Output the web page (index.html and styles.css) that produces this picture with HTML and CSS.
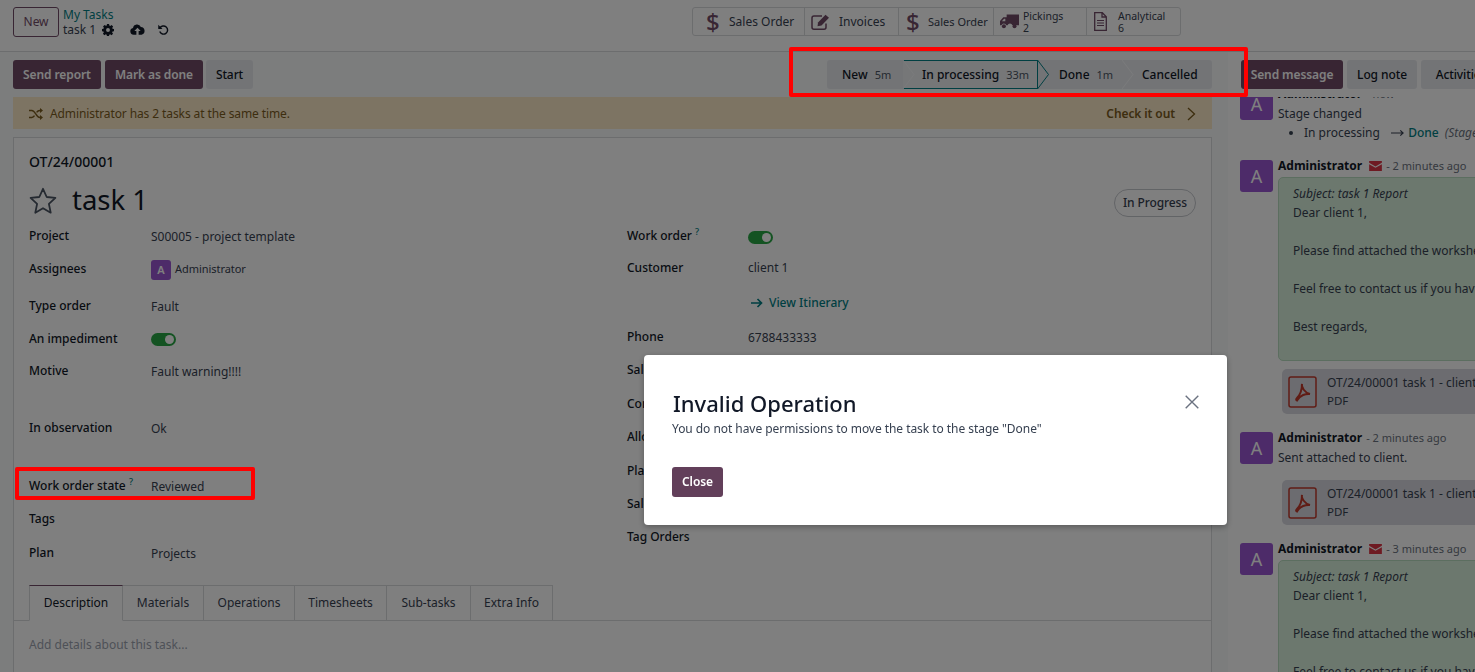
FILE: index.html
```html
<!DOCTYPE html>
<html>

<head>
    <meta charset="UTF-8">
    <title>task 1</title>
    <link rel="stylesheet" href="styles.css">
</head>

<body>
    <div class="topbar">
        <a class="btn btn-outline" href="#">New</a>
        <div class="crumbs">
            <a href="#">My Tasks</a>
            <div class="crumb-row">
                <span>task 1</span>
                <svg class="ic-gear" viewBox="0 0 16 16"><path d="M6.6 0h2.8l.4 2.1 1.2.5L12.8 1.400l2 2-1.200 1.800.5 1.200 1.900.400v2.800l-2 .4-.5 1.200 1.200 1.800-2 2-1.800-1.200-1.200.5-.4 2H6.600l-.4-2-1.200-.5-1.800 1.200-2-2 1.200-1.800-.5-1.200-1.900-.4V6.600l2-.4.5-1.200L1.400 3.200l2-2 1.800 1.200 1.200-.5z M8 5.400a2.600 2.600 0 1 0 0 5.200 2.600 2.600 0 0 0 0-5.200z" fill-rule="evenodd"/></svg>
                <svg class="ic-cloud" viewBox="0 0 20 14"><path d="M5 14a4.500 4.500 0 0 1-1-8.900A5.500 5.500 0 0 1 14.500 3.600 5.300 5.300 0 0 1 15.500 14h-4V9h2.700L10 4.500 5.800 9h2.700v5z"/></svg>
                <svg class="ic-undo" viewBox="0 0 16 16"><path d="M3.600 6.400A5 5 0 1 1 3.400 10.500" fill="none" stroke="currentColor" stroke-width="1.800"/><path d="M1.500 2.200v5.300h5.300z"/></svg>
            </div>
        </div>
        <div class="stats">
            <a class="stat stat-sales" href="#"><span class="dollar">$</span><span class="stat-text">Sales Order</span></a>
            <a class="stat stat-invoices" href="#">
                <svg class="ic-edit" viewBox="0 0 20 16"><path d="M15 9.500v3.700a2 2 0 0 1-2 2H3a2 2 0 0 1-2-2V4a2 2 0 0 1 2-2h8" fill="none" stroke="currentColor" stroke-width="1.500"/><path d="M7 8.500 14.500.8l3.500 3-7.500 7.700-4 .8z"/></svg>
                <span class="stat-text">Invoices</span>
            </a>
            <a class="stat stat-sales2" href="#"><span class="dollar">$</span><span class="stat-text">Sales Order</span></a>
            <a class="stat stat-pickings" href="#">
                <svg class="ic-truck" viewBox="0 0 20 15"><path d="M7 0h13v11.500h-7a2.600 2.600 0 0 0-5 0H6.600a2.600 2.600 0 0 0-5 0H0V7l3.500-4H7zM5.600 4.500H4.300L2 7.200h3.600z" fill-rule="evenodd"/><circle cx="4.100" cy="12.500" r="2.100"/><circle cx="15.300" cy="12.500" r="2.100"/></svg>
                <span class="stat-lines">Pickings<br>2</span>
            </a>
            <a class="stat stat-analytical" href="#">
                <svg class="ic-file" viewBox="0 0 13 19"><path d="M.7.7h7.600l4 4v13.600H.7z M8 .7v4.300h4.300" fill="none" stroke="currentColor" stroke-width="1.300"/><path d="M3 8.500h7M3 11h7M3 13.500h7" stroke="currentColor" stroke-width="1.200"/></svg>
                <span class="stat-lines">Analytical<br>6</span>
            </a>
        </div>
    </div>

    <div class="main">
        <div class="form">
            <div class="actionbar">
                <a class="btn btn-primary btn-report" href="#">Send report</a>
                <a class="btn btn-primary btn-mark" href="#">Mark as done</a>
                <a class="btn btn-secondary btn-start" href="#">Start</a>
                <div class="stages">
                    <div class="stage stage-new">New <small>5m</small>
                        <svg class="tip" viewBox="0 0 13 29"><path d="M0 0l11 14.500L0 29" fill="none" stroke="#f5f6f8"/></svg>
                    </div>
                    <div class="stage stage-current">In processing <small>33m</small>
                        <svg class="tip" viewBox="0 0 13 29"><path d="M.5 0l11 14.500L.5 29" fill="none" stroke="#017e84"/></svg>
                    </div>
                    <div class="stage stage-done">Done <small>1m</small>
                        <svg class="tip" viewBox="0 0 13 29"><path d="M0 0l11 14.500L0 29" fill="none" stroke="#f5f6f8"/></svg>
                    </div>
                    <div class="stage stage-last">Cancelled</div>
                </div>
            </div>

            <div class="alert">
                <svg class="ic-random" viewBox="0 0 14 12"><path d="M0 2.500h2.800C6.500 2.500 7 9.500 10.800 9.500H11.500M0 9.500h2.800C4 9.500 4.900 8.700 5.500 7.700M7.600 4.300C8.400 3.200 9.300 2.500 10.800 2.500H11.500" fill="none" stroke="currentColor" stroke-width="1.400"/><path d="M11 0l3 2.500L11 5zM11 7l3 2.500L11 12z"/></svg>
                <span>Administrator has 2 tasks at the same time.</span>
                <a class="alert-link" href="#">Check it out
                    <svg class="ic-chev" viewBox="0 0 9 14"><path d="M1 1l6.500 6L1 13" fill="none" stroke="currentColor" stroke-width="1.300"/></svg>
                </a>
            </div>

            <div class="sheet">
                <div class="refname">OT/24/00001</div>
                <div class="title-row">
                    <svg class="ic-star" viewBox="0 0 28 27"><path d="M14 1.800l3.700 8.200 8.700.9-6.500 6 1.800 8.800L14 21.200l-7.700 4.500 1.800-8.800-6.500-6 8.700-.9z" fill="none" stroke="currentColor" stroke-width="1.800" stroke-linejoin="round"/></svg>
                    <h1>task 1</h1>
                    <span class="state-pill">In Progress</span>
                </div>
                <div class="groups">
                    <div class="group group-left">
                        <label>Project</label><div class="val">S00005 - project template</div>
                        <label>Assignees</label><div class="val assignee"><span class="avatar avatar-xs">A</span>Administrator</div>
                        <label>Type order</label><div class="val">Fault</div>
                        <label>An impediment</label><div class="val"><span class="toggle"></span></div>
                        <label>Motive</label><div class="val">Fault warning!!!!</div>
                        <label>In observation</label><div class="val">Ok</div>
                        <label>Work order state <sup>?</sup></label><div class="val">Reviewed</div>
                        <label>Tags</label><div class="val"></div>
                        <label>Plan</label><div class="val">Projects</div>
                    </div>
                    <div class="group group-right">
                        <label>Work order <sup>?</sup></label><div class="val"><span class="toggle"></span></div>
                        <label>Customer</label><div class="val val-flat">client 1</div>
                        <label></label>
                        <div class="val val-flat"><a class="itinerary" href="#">
                            <svg class="ic-arrow" viewBox="0 0 12 10"><path d="M0 5h10M6.500 1l4 4-4 4" fill="none" stroke="currentColor" stroke-width="1.700"/></svg>
                            View Itinerary</a></div>
                        <label>Phone</label><div class="val">6788433333</div>
                        <label>Sales Order</label><div class="val"></div>
                        <label>Contract</label><div class="val"></div>
                        <label>Allocated Hours</label><div class="val"></div>
                        <label>Planned Date</label><div class="val"></div>
                        <label>Sales Order Item</label><div class="val"></div>
                        <label>Tag Orders</label><div class="val"></div>
                    </div>
                </div>
                <div class="tabs">
                    <a class="tab tab-active" href="#">Description</a>
                    <a class="tab" href="#">Materials</a>
                    <a class="tab" href="#">Operations</a>
                    <a class="tab" href="#">Timesheets</a>
                    <a class="tab" href="#">Sub-tasks</a>
                    <a class="tab" href="#">Extra Info</a>
                </div>
                <div class="placeholder">Add details about this task...</div>
            </div>
        </div>

        <div class="chatter">
            <div class="chatter-bar">
                <a class="btn btn-primary" href="#">Send message</a>
                <a class="btn btn-secondary" href="#">Log note</a>
                <a class="btn btn-secondary" href="#">Activities</a>
            </div>
            <div class="thread">
                <div class="thread-inner">
                    <div class="msg">
                        <span class="avatar">A</span>
                        <div class="msg-body">
                            <div class="msg-head"><b>Administrator</b> <span class="when">- now</span></div>
                            <div>Stage changed</div>
                            <ul>
                                <li>In processing
                                    <svg class="ic-long" viewBox="0 0 14 8"><path d="M0 4h12.500M10 1.200 13 4l-3 2.800" fill="none" stroke="currentColor" stroke-width="1.300"/></svg>
                                    <a href="#">Done</a> <em>(Stage)</em></li>
                            </ul>
                        </div>
                    </div>

                    <div class="msg">
                        <span class="avatar">A</span>
                        <div class="msg-body">
                            <div class="msg-head"><b>Administrator</b>
                                <svg class="ic-mail" viewBox="0 0 14 11"><path d="M0 0h14v2L7 6 0 2zM0 3.500l7 4 7-4V11H0z"/></svg>
                                <span class="when">- 2 minutes ago</span></div>
                            <div class="mail-box">
                                <em>Subject: task 1 Report</em>
                                <p>Dear client 1,</p>
                                <p>Please find attached the worksheet of our task.</p>
                                <p>Feel free to contact us if you have any questions.</p>
                                <p>Best regards,</p>
                            </div>
                            <div class="attachment">
                                <svg class="ic-pdf" viewBox="0 0 29 32"><rect x="1" y="1" width="27" height="30" rx="2" fill="none" stroke="currentColor" stroke-width="1.500"/><path d="M14 8c-1 3 3 9 8 10-4-.5-10 1-13 6.500 0 0-2-.5 0-2.500 3-3 5-9 5-14z" fill="none" stroke="currentColor" stroke-width="2"/></svg>
                                <div class="att-text">OT/24/00001 task 1 - client 1<small>PDF</small></div>
                            </div>
                        </div>
                    </div>

                    <div class="msg">
                        <span class="avatar">A</span>
                        <div class="msg-body">
                            <div class="msg-head"><b>Administrator</b> <span class="when">- 2 minutes ago</span></div>
                            <div>Sent attached to client.</div>
                            <div class="attachment">
                                <svg class="ic-pdf" viewBox="0 0 29 32"><rect x="1" y="1" width="27" height="30" rx="2" fill="none" stroke="currentColor" stroke-width="1.500"/><path d="M14 8c-1 3 3 9 8 10-4-.5-10 1-13 6.500 0 0-2-.5 0-2.500 3-3 5-9 5-14z" fill="none" stroke="currentColor" stroke-width="2"/></svg>
                                <div class="att-text">OT/24/00001 task 1 - client 1<small>PDF</small></div>
                            </div>
                        </div>
                    </div>

                    <div class="msg">
                        <span class="avatar">A</span>
                        <div class="msg-body">
                            <div class="msg-head"><b>Administrator</b>
                                <svg class="ic-mail" viewBox="0 0 14 11"><path d="M0 0h14v2L7 6 0 2zM0 3.500l7 4 7-4V11H0z"/></svg>
                                <span class="when">- 3 minutes ago</span></div>
                            <div class="mail-box">
                                <em>Subject: task 1 Report</em>
                                <p>Dear client 1,</p>
                                <p>Please find attached the worksheet of our task.</p>
                                <p>Feel free to contact us if you have any questions.</p>
                                <p>Best regards,</p>
                            </div>
                        </div>
                    </div>
                </div>
            </div>
        </div>
    </div>

    <div class="backdrop"></div>

    <div class="modal">
        <div class="modal-head">
            <h2>Invalid Operation</h2>
            <svg class="ic-close" viewBox="0 0 14 14"><path d="M.7.7l12.600 12.600M13.300.7.7 13.300" fill="none" stroke="currentColor" stroke-width="1.400"/></svg>
        </div>
        <p>You do not have permissions to move the task to the stage "Done"</p>
        <a class="btn btn-close" href="#">Close</a>
    </div>

    <div class="redbox redbox-stages"></div>
    <div class="redbox redbox-state"></div>
</body>

</html>
```

FILE: styles.css
```css
* {
    box-sizing: border-box;
}

html, body {
    height: 100%;
}

body {
    margin: 0;
    overflow: hidden;
    background-color: #fff;
    color: #374151;
    font-family: "Noto Sans", "Liberation Sans", sans-serif;
    font-size: 12px;
    line-height: 18px;
}

a {
    text-decoration: none;
    color: inherit;
}

svg {
    flex: none;
    fill: currentColor;
}

/* buttons */
.btn {
    display: inline-flex;
    flex: none;
    align-items: center;
    justify-content: center;
    height: 29px;
    border-radius: 3px;
    font-weight: 600;
    letter-spacing: -.1px;
    white-space: nowrap;
}

.btn-primary {
    background-color: #714b67;
    color: #fff;
}

.btn-secondary {
    background-color: #e7e9ed;
    color: #111827;
    font-weight: 500;
}

.btn-outline {
    width: 46px;
    height: 30px;
    border: 1px solid #714b67;
    color: #714b67;
    font-weight: 400;
}

.btn-report { width: 88px; }
.btn-mark { width: 98px; }
.btn-start { width: 47px; }

/* top bar */
.topbar {
    display: flex;
    height: 52px;
    padding: 7px 0 0 13px;
    border-bottom: 1px solid #d8dadd;
}

.crumbs {
    width: 120px;
    margin-left: 4px;
    line-height: 15px;
}

.crumbs > a {
    display: block;
    color: #017e84;
}

.crumb-row {
    display: flex;
    align-items: center;
}

.ic-gear {
    width: 12px;
    height: 12px;
    margin-left: 6px;
    color: #111827;
}

.ic-cloud {
    width: 15px;
    height: 11px;
    margin-left: 16px;
    color: #111827;
}

.ic-undo {
    width: 13px;
    height: 13px;
    margin-left: 12px;
    color: #111827;
}

.stats {
    display: flex;
    height: 29px;
    margin-left: 509px;
    border: 1px solid #d8dadd;
    border-radius: 3px;
}

.stat {
    display: flex;
    align-items: center;
    width: 94px;
    border-left: 1px solid #d8dadd;
    color: #374151;
}

.stat-sales {
    width: 111px;
    padding-left: 13px;
    border-left: 0;
}

.stat-invoices {
    padding-left: 6px;
}

.stat-sales2 {
    width: 95px;
    padding-left: 7px;
}

.stat-pickings {
    width: 93px;
    padding-left: 6px;
}

.stat-analytical {
    padding-left: 7px;
}

.dollar {
    width: 12px;
    color: #714b67;
    font-size: 24px;
    font-weight: 500;
    line-height: 27px;
}

.stat-text {
    margin-left: 11px;
}

.stat-invoices .stat-text {
    margin-left: 8px;
}

.stat-sales2 .stat-text {
    margin-left: 10px;
    font-size: 11px;
}

.stat-lines {
    margin-left: 4px;
    font-size: 10.500px;
    line-height: 12px;
}

.stat-analytical .stat-lines {
    margin-left: 11px;
}

.ic-edit {
    width: 20px;
    height: 16px;
    color: #714b67;
}

.ic-truck {
    width: 19px;
    height: 15px;
    color: #714b67;
}

.ic-file {
    width: 13px;
    height: 19px;
    color: #714b67;
}

/* main columns */
.main {
    display: flex;
    height: calc(100vh - 52px);
    overflow: hidden;
}

.form {
    width: 1228px;
    flex: none;
    padding: 8px 16px 0 13px;
    overflow: hidden;
    background-color: #f9fafb;
}

.actionbar {
    display: flex;
    gap: 4px;
    height: 29px;
}

.btn-start {
    margin-left: -1px;
}

.stages {
    display: flex;
    margin-left: auto;
    height: 29px;
    border-radius: 3px;
    background-color: #e7e9ed;
    color: #111827;
    font-weight: 500;
}

.stage {
    position: relative;
    display: flex;
    align-items: center;
    gap: 7px;
    white-space: nowrap;
}

.stage small {
    color: #4b5563;
    font-size: 11px;
    font-weight: 400;
}

.stage .tip {
    position: absolute;
    top: 0;
    left: 100%;
    width: 13px;
    height: 29px;
    z-index: 1;
}

.stage-new {
    width: 76px;
    padding-left: 15px;
}

.stage-current {
    width: 135px;
    padding-left: 19px;
    background-color: #eceef1;
    border-top: 1px solid #017e84;
    border-right: 1px solid #017e84;
    border-bottom: 1px solid #017e84;
}

.stage-current .tip {
    top: -1px;
    left: 100%;
}

.stage-done {
    width: 84px;
    padding-left: 21px;
}

.stage-last {
    width: 90px;
    padding-left: 20px;
}

.alert {
    display: flex;
    align-items: center;
    height: 32px;
    margin-top: 8px;
    padding: 1px 16px 0;
    background-color: #fbe8c6;
    color: #7a5c1e;
    letter-spacing: -.1px;
}

.ic-random {
    width: 14px;
    height: 12px;
    margin-right: 7px;
}

.alert-link {
    display: flex;
    align-items: center;
    gap: 12px;
    margin-left: auto;
    font-weight: 600;
}

.ic-chev {
    width: 9px;
    height: 14px;
}

/* sheet */
.sheet {
    height: 600px;
    margin-top: 8px;
    padding: 15px 15px 0;
    border: 1px solid #d8dadd;
    background-color: #fff;
}

.refname {
    color: #111827;
    font-size: 14px;
    font-weight: 500;
}

.title-row {
    display: flex;
    align-items: center;
    height: 40px;
    margin-top: 9px;
}

.ic-star {
    width: 28px;
    height: 27px;
    color: #4b5563;
}

h1 {
    margin: 0 0 0 15px;
    color: #111827;
    font-size: 27.500px;
    font-weight: 400;
    line-height: 40px;
}

.state-pill {
    display: flex;
    align-items: center;
    height: 28px;
    margin-top: 6px;
    margin-left: auto;
    padding: 0 8px;
    border: 1px solid #c5c8cd;
    border-radius: 14px;
    color: #374151;
    font-weight: 500;
    letter-spacing: -.1px;
}

.groups {
    display: flex;
    margin-top: 7px;
}

.group {
    display: grid;
    grid-template-columns: 122px 1fr;
}

.group-left {
    width: 598px;
    grid-template-rows: 33px 37px 33px 32px 57px 58px 33px 34px 33px;
}

.group-right {
    flex: 1;
    grid-template-columns: 121px 1fr;
    grid-template-rows: 32px 35px 34px 33px 34px 33px 34px 33px 33px 33px;
}

label {
    color: #111827;
    font-weight: 500;
    white-space: nowrap;
}

sup {
    color: #017e84;
    font-size: 9px;
    line-height: 0;
}

.val {
    padding-top: 1px;
}

.val-flat {
    padding-top: 0;
}

.assignee {
    display: flex;
    align-items: flex-start;
    padding-top: 0;
    font-size: 11px;
    letter-spacing: -.05px;
}

.avatar {
    display: flex;
    align-items: center;
    justify-content: center;
    width: 33px;
    height: 32px;
    flex: none;
    border-radius: 3px;
    background-color: #9a56d2;
    color: #fff;
    font-size: 18px;
}

.avatar-xs {
    width: 20px;
    height: 20px;
    margin-right: 4px;
    font-size: 11px;
    font-weight: 600;
}

.toggle {
    position: relative;
    display: block;
    width: 25px;
    height: 13px;
    margin-top: 2px;
    border-radius: 7px;
    background-color: #28a745;
}

.toggle::after {
    content: "";
    position: absolute;
    top: 2px;
    right: 2px;
    width: 9px;
    height: 9px;
    border-radius: 50%;
    background-color: #fff;
}

.group-right .toggle {
    margin-top: 3px;
}

.itinerary {
    display: flex;
    align-items: center;
    gap: 6px;
    margin-left: 3px;
    color: #017e84;
    font-weight: 500;
}

.ic-arrow {
    width: 12px;
    height: 10px;
}

.tabs {
    display: flex;
    margin: 8px -15px 0;
    padding-left: 15px;
    border-bottom: 1px solid #d8dadd;
}

.tab {
    height: 36px;
    margin-bottom: -1px;
    padding-top: 8px;
    border: 1px solid #d8dadd;
    border-left: 0;
    text-align: center;
    white-space: nowrap;
}

.tab-active {
    width: 94px;
    border-left: 1px solid #d8dadd;
    border-top-color: #714b67;
    border-bottom-color: #fff;
    color: #111827;
}

.tab:nth-child(2) { width: 81px; }
.tab:nth-child(3) { width: 91px; }
.tab:nth-child(4) { width: 92px; }
.tab:nth-child(5) { width: 84px; }
.tab:nth-child(6) { width: 82px; }

.placeholder {
    margin-top: 15px;
    color: #9ca3af;
}

/* chatter */
.chatter {
    flex: 1;
    min-width: 0;
    overflow: hidden;
    background-color: #fff;
}

.chatter-bar {
    display: flex;
    gap: 4px;
    height: 45px;
    padding: 8px 0 0 13px;
}

.chatter-bar .btn-primary {
    width: 102px;
}

.chatter-bar .btn-secondary {
    width: 70px;
}

.chatter-bar .btn-secondary:last-child {
    width: 80px;
}

.thread {
    height: 575px;
    overflow: hidden;
}

.thread-inner {
    width: 420px;
    margin-top: -9px;
    padding-left: 12px;
}

.msg {
    display: flex;
    gap: 5px;
    margin-bottom: 18px;
}

.msg-head {
    display: flex;
    align-items: center;
    gap: 4px;
    height: 12px;
    margin-bottom: 5px;
}

.msg-head b {
    color: #111827;
    font-weight: 700;
}

.when {
    color: #6b7280;
    font-size: 11px;
}

.ic-mail {
    width: 13px;
    height: 10px;
    margin-left: 3px;
    color: #dc3545;
}

ul {
    margin: 1px 0 0;
    padding-left: 26px;
}

li a {
    color: #017e84;
    font-weight: 500;
}

li em {
    margin-left: 3px;
    color: #6b7280;
}

.ic-long {
    width: 13px;
    height: 8px;
    margin: 0 1px 0 8px;
}

.mail-box {
    width: 400px;
    height: 184px;
    padding: 6px 14px;
    border: 1px solid #b9dcc0;
    border-radius: 5px;
    background-color: #d8f0dc;
    line-height: 19px;
}

.mail-box em {
    display: block;
}

.mail-box p {
    margin: 0 0 19px;
}

.attachment {
    display: flex;
    align-items: center;
    gap: 10px;
    width: 400px;
    height: 45px;
    margin: 13px 0 0 4px;
    padding-left: 6px;
    border-radius: 5px;
    background-color: #d8d9e0;
}

.mail-box + .attachment {
    margin-top: 8px;
}

.ic-pdf {
    width: 29px;
    height: 32px;
    color: #c0392b;
    fill: none;
}

.att-text small {
    display: block;
    font-size: 11.500px;
}

/* dialog layer */
.backdrop {
    position: fixed;
    inset: 0;
    z-index: 10;
    background-color: rgba(0, 0, 0, .5);
}

.modal {
    position: fixed;
    top: 355px;
    left: 644px;
    z-index: 11;
    width: 583px;
    height: 170px;
    padding: 34px 28px 0 28px;
    border-radius: 4px;
    background-color: #fff;
    box-shadow: 0 2px 6px rgba(0, 0, 0, .3);
}

.modal-head {
    display: flex;
    align-items: center;
    justify-content: space-between;
    height: 28px;
}

h2 {
    margin: 0 0 0 1px;
    color: #111827;
    font-size: 22px;
    font-weight: 500;
    line-height: 28px;
}

.ic-close {
    width: 14px;
    height: 14px;
    margin-top: -2px;
    color: #6b7280;
}

.modal p {
    margin: 3px 0 0;
    color: #374151;
    letter-spacing: -.05px;
}

.btn-close {
    width: 51px;
    height: 30px;
    margin-top: 29px;
    background-color: #623f5a;
    color: #fff;
}

/* annotation boxes */
.redbox {
    position: fixed;
    z-index: 12;
    border: 4px solid #f00;
    border-radius: 2px;
}

.redbox-stages {
    top: 47px;
    left: 789px;
    width: 459px;
    height: 50px;
}

.redbox-state {
    top: 467px;
    left: 15px;
    width: 240px;
    height: 33px;
}
```
